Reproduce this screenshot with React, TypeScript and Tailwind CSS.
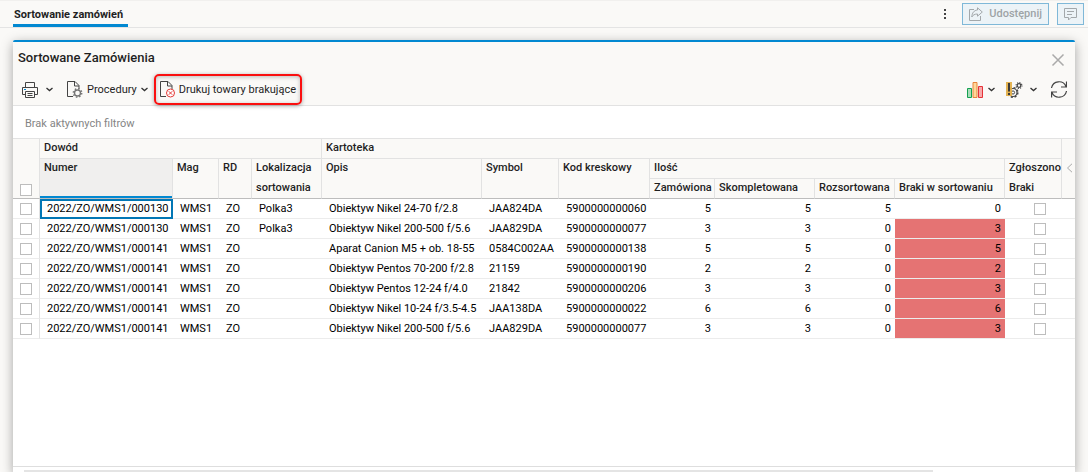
import { useState } from 'react';

type Row = {
  number: string;
  location: string;
  description: string;
  symbol: string;
  barcode: string;
  ordered: number;
  completed: number;
  sorted: number;
  missing: number;
};

const ROWS: Row[] = [
  { number: '2022/ZO/WMS1/000130', location: 'Polka3', description: 'Obiektyw Nikel 24-70 f/2.8', symbol: 'JAA824DA', barcode: '5900000000060', ordered: 5, completed: 5, sorted: 5, missing: 0 },
  { number: '2022/ZO/WMS1/000130', location: 'Polka3', description: 'Obiektyw Nikel 200-500 f/5.6', symbol: 'JAA829DA', barcode: '5900000000077', ordered: 3, completed: 3, sorted: 0, missing: 3 },
  { number: '2022/ZO/WMS1/000141', location: '', description: 'Aparat Canion M5 + ob. 18-55', symbol: '0584C002AA', barcode: '5900000000138', ordered: 5, completed: 5, sorted: 0, missing: 5 },
  { number: '2022/ZO/WMS1/000141', location: '', description: 'Obiektyw Pentos 70-200 f/2.8', symbol: '21159', barcode: '5900000000190', ordered: 2, completed: 2, sorted: 0, missing: 2 },
  { number: '2022/ZO/WMS1/000141', location: '', description: 'Obiektyw Pentos 12-24 f/4.0', symbol: '21842', barcode: '5900000000206', ordered: 3, completed: 3, sorted: 0, missing: 3 },
  { number: '2022/ZO/WMS1/000141', location: '', description: 'Obiektyw Nikel 10-24 f/3.5-4.5', symbol: 'JAA138DA', barcode: '5900000000022', ordered: 6, completed: 6, sorted: 0, missing: 6 },
  { number: '2022/ZO/WMS1/000141', location: '', description: 'Obiektyw Nikel 200-500 f/5.6', symbol: 'JAA829DA', barcode: '5900000000077', ordered: 3, completed: 3, sorted: 0, missing: 3 },
];

const CHECKBOX =
  'block size-3 appearance-none border border-[#bdbdbd] bg-white checked:bg-[#0288d1]';
const HEAD = 'border-r border-b border-[#e2e2e2] px-1 text-left align-top font-medium';
const CELL = 'border-b border-[#ececec] pt-px';

const Chevron = () => (
  <svg width="7" height="5" viewBox="0 0 7 5" fill="none" stroke="#333" strokeWidth="1.3">
    <path d="M.5 1l3 2.6 3-2.6" />
  </svg>
);

const PrinterIcon = () => (
  <svg width="16" height="16" viewBox="0 0 16 16" fill="none" stroke="#444">
    <path d="M3.5 5.500V.5h9v5M3.500 12.500h-3v-7h15v7h-3M3.500 9.500h9v6h-9zM5.500 11.500h5M5.500 13.500h5" />
    <path d="M2 7.500h2" stroke="#0288d1" />
  </svg>
);

const PAGE_PATH = 'M6 15.500H.5V.5h7.500l4 4V8M7.500.5v4.500H12';

const ProcedureIcon = () => (
  <svg width="16" height="17" viewBox="0 0 16 17" fill="none" stroke="#444">
    <path d={PAGE_PATH} />
    <g stroke="#777">
      <circle cx="10.500" cy="12" r="3" strokeWidth="1.400" />
      <circle cx="10.500" cy="12" r="4.200" strokeWidth="1.500" strokeDasharray="1.500 1.800" />
    </g>
  </svg>
);

const MissingIcon = () => (
  <svg width="16" height="17" viewBox="0 0 16 17" fill="none" stroke="#444">
    <path d={PAGE_PATH} />
    <g stroke="#e53935">
      <circle cx="10.500" cy="12" r="4" fill="#fff" />
      <path d="M8.800 10.300l3.400 3.400M12.200 10.300l-3.400 3.400" />
    </g>
  </svg>
);

const ChartIcon = () => (
  <svg width="16" height="16" viewBox="0 0 16 16">
    <path d="M.5 6.500h4v9h-4z" fill="#a9dcb9" stroke="#12a150" />
    <path d="M11.500 4.500h4v11h-4z" fill="#f7a9ab" stroke="#e53238" />
    <path d="M6 .5h4v15H6z" fill="#ffd79a" stroke="#e8833a" />
  </svg>
);

const SettingsIcon = () => (
  <svg width="17" height="16" viewBox="0 0 17 16" fill="none" stroke="#444">
    <circle cx="13" cy="3.500" r="1.800" strokeWidth="1.200" />
    <circle cx="13" cy="3.500" r="2.900" strokeWidth="1.200" strokeDasharray="1.100 1.180" />
    <circle cx="7" cy="10.500" r="1.600" />
    <circle cx="7" cy="10.500" r="4" strokeWidth="1.200" />
    <circle cx="7" cy="10.500" r="4.900" strokeWidth="1.400" strokeDasharray="2 1.850" />
    <path d="M0 0h6v14H0z" fill="#e3b04b" stroke="none" opacity=".95" />
    <path d="M3 1v8.500M3 11v2" strokeWidth="2" stroke="#3a3a3a" />
  </svg>
);

const RefreshIcon = () => (
  <svg width="16" height="17" viewBox="0 0 16 17" fill="none" stroke="#444" strokeWidth="1.200">
    <path d="M.5 7A7.600 7.600 0 0 1 15 5.500M15.500.5v5.500H10M15.500 10A7.600 7.600 0 0 1 1 11.500M.6 16.500V11H6" />
  </svg>
);

const ShareIcon = () => (
  <svg width="14" height="14" viewBox="0 0 14 14" fill="none" stroke="#a3a8ab">
    <path d="M5 2.500H.5v11h11V9" />
    <path d="M8.500 3V.8L13.300 5 8.500 9.200V7C5.500 7 4 8 2.800 10 3 6 5 3.300 8.500 3z" />
  </svg>
);

const CommentIcon = () => (
  <svg width="13" height="13" viewBox="0 0 13 13" fill="none" stroke="#a3a8ab">
    <path d="M.5.5h12v9H7L4.500 12V9.500h-4zM3 3.500h7M3 6.500h5" />
  </svg>
);

export default function App() {
  const [selected, setSelected] = useState<number[]>([]);

  const toggle = (index: number) =>
    setSelected((prev) =>
      prev.includes(index) ? prev.filter((i) => i !== index) : [...prev, index]
    );

  const toggleAll = () =>
    setSelected(selected.length === ROWS.length ? [] : ROWS.map((_, i) => i));

  return (
    <div className="flex h-screen flex-col overflow-hidden bg-[#faf9f7] font-['Roboto','Liberation_Sans',sans-serif] text-[11px] leading-5 text-[#1f1f1f]">
      <header className="flex h-7 shrink-0 items-stretch border-y border-t-[#f1f0ee] border-b-[#e4e4e4] pr-1 pl-[13px]">
        <a href="#sortowanie" className="border-b-3 border-[#0288d1] pt-1 pr-[5px] pl-px font-bold">
          Sortowanie zamówień
        </a>
        <div className="ml-auto flex items-center">
          <button type="button" aria-label="Więcej" className="mr-4 flex flex-col gap-0.5">
            <span className="size-0.5 bg-[#444]" />
            <span className="size-0.5 bg-[#444]" />
            <span className="size-0.5 bg-[#444]" />
          </button>
          <button
            type="button"
            className="mr-2 flex h-[22px] items-center gap-1.5 border border-[#7fb8d8] bg-[#ecf3f7] px-1.5 font-medium text-[#9ea3a6]"
          >
            <ShareIcon />
            Udostępnij
          </button>
          <button
            type="button"
            aria-label="Komentarze"
            className="flex h-[22px] items-center border border-[#7fb8d8] bg-[#ecf3f7] px-1.5"
          >
            <CommentIcon />
          </button>
        </div>
      </header>

      <main className="mx-[13px] mt-3 flex min-h-0 flex-1 flex-col rounded-t-xs border-t-2 border-[#0288d1] bg-white shadow-[0_3px_12px_rgba(0,0,0,0.35)]">
        <div className="flex h-8 shrink-0 items-center justify-between bg-[#faf9f7] pr-2.5 pl-[5px]">
          <h1 className="text-[13px] font-medium">Sortowane Zamówienia</h1>
          <button type="button" aria-label="Zamknij" className="pt-1">
            <svg width="14" height="14" viewBox="0 0 14 14" stroke="#aaa" strokeWidth="1.500">
              <path d="M1.500 1.500l11 11M12.500 1.500l-11 11" />
            </svg>
          </button>
        </div>

        <div className="flex h-8 shrink-0 items-center border-b border-[#e2e2e2] bg-[#faf9f7] pr-2 pl-[9px]">
          <button type="button" aria-label="Drukuj" className="mr-3.5 flex items-center gap-2">
            <PrinterIcon />
            <Chevron />
          </button>
          <button type="button" className="mr-1.5 flex items-center gap-1">
            <ProcedureIcon />
            Procedury
            <Chevron />
          </button>
          <button
            type="button"
            className="flex h-[31px] items-center gap-[3px] rounded-[5px] border-2 border-[#fa0f0f] px-1 shadow-[0_1px_4px_rgba(0,0,0,0.35),inset_0_1px_4px_rgba(0,0,0,0.25)]"
          >
            <MissingIcon />
            Drukuj towary brakujące
          </button>
          <div className="ml-auto flex items-center">
            <button type="button" aria-label="Wykresy" className="mr-[11px] flex items-center gap-[5px]">
              <ChartIcon />
              <Chevron />
            </button>
            <button type="button" aria-label="Ustawienia" className="mr-3.5 flex items-center gap-[7px]">
              <SettingsIcon />
              <Chevron />
            </button>
            <button type="button" aria-label="Odśwież">
              <RefreshIcon />
            </button>
          </div>
        </div>

        <p className="h-8 shrink-0 px-3 py-2 text-[#858585]">Brak aktywnych filtrów</p>

        <div className="min-h-0 flex-1 overflow-hidden border-t border-[#e2e2e2]">
          <table className="w-full table-fixed border-separate border-spacing-0 whitespace-nowrap">
            <colgroup>
              <col className="w-[27px]" />
              <col className="w-[133px]" />
              <col className="w-[46px]" />
              <col className="w-[33px]" />
              <col className="w-[70px]" />
              <col className="w-[160px]" />
              <col className="w-[77px]" />
              <col className="w-[91px]" />
              <col className="w-[65px]" />
              <col className="w-[100px]" />
              <col className="w-[80px]" />
              <col className="w-[110px]" />
              <col className="w-[57px]" />
              <col />
            </colgroup>
            <thead className="bg-[#faf9f7] leading-[18px]">
              <tr className="h-5">
                <th rowSpan={3} className="border-r border-b border-r-[#e2e2e2] border-b-[#bdbdbd] pb-0.5 pl-[7px] align-bottom">
                  <input
                    type="checkbox"
                    aria-label="Zaznacz wszystkie"
                    className={CHECKBOX}
                    checked={selected.length === ROWS.length}
                    onChange={toggleAll}
                  />
                </th>
                <th colSpan={4} className={HEAD}>Dowód</th>
                <th colSpan={8} className={HEAD}>Kartoteka</th>
                <th rowSpan={3} className="border-b border-[#bdbdbd] pl-0.5 align-top">
                  <button type="button" aria-label="Pokaż kolumny" className="mt-6">
                    <svg width="7" height="10" viewBox="0 0 7 10" fill="none" stroke="#aaa">
                      <path d="M6 .8L1.500 5 6 9.200" />
                    </svg>
                  </button>
                </th>
              </tr>
              <tr className="h-5">
                <th rowSpan={2} className={`${HEAD} border-b-[#bdbdbd] bg-[#f0efee] font-bold shadow-[inset_0_-2px_0_#0288d1]`}>Numer</th>
                <th rowSpan={2} className={`${HEAD} border-b-[#bdbdbd]`}>Mag</th>
                <th rowSpan={2} className={`${HEAD} border-b-[#bdbdbd]`}>RD</th>
                <th rowSpan={2} className={`${HEAD} border-b-[#bdbdbd]`}>
                  <span className="block h-5">Lokalizacja</span>
                  <span className="block">sortowania</span>
                </th>
                <th rowSpan={2} className={`${HEAD} border-b-[#bdbdbd]`}>Opis</th>
                <th rowSpan={2} className={`${HEAD} border-b-[#bdbdbd]`}>Symbol</th>
                <th rowSpan={2} className={`${HEAD} border-b-[#bdbdbd]`}>Kod kreskowy</th>
                <th colSpan={4} className={HEAD}>Ilość</th>
                <th rowSpan={2} className={`${HEAD} border-b-[#bdbdbd]`}>
                  <span className="block h-5">Zgłoszono</span>
                  <span className="block">Braki</span>
                </th>
              </tr>
              <tr className="h-5">
                <th className={`${HEAD} border-b-[#bdbdbd]`}>Zamówiona</th>
                <th className={`${HEAD} border-b-[#bdbdbd]`}>Skompletowana</th>
                <th className={`${HEAD} border-b-[#bdbdbd]`}>Rozsortowana</th>
                <th className={`${HEAD} border-b-[#bdbdbd]`}>Braki w sortowaniu</th>
              </tr>
            </thead>
            <tbody className="leading-[18px] text-black">
              {ROWS.map((row, index) => (
                <tr key={index} className="h-5">
                  <td className={`${CELL} border-r border-r-[#e2e2e2] pl-[7px]`}>
                    <input
                      type="checkbox"
                      aria-label={`Zaznacz wiersz ${index + 1}`}
                      className={CHECKBOX}
                      checked={selected.includes(index)}
                      onChange={() => toggle(index)}
                    />
                  </td>
                  <td className={`${CELL} pl-[7px] ${index === 0 ? 'outline-2 -outline-offset-2 outline-[#0277b5]' : ''}`}>
                    {row.number}
                  </td>
                  <td className={`${CELL} pl-[7px]`}>WMS1</td>
                  <td className={`${CELL} pl-[7px]`}>ZO</td>
                  <td className={`${CELL} pl-[7px]`}>{row.location}</td>
                  <td className={`${CELL} pl-[7px]`}>{row.description}</td>
                  <td className={`${CELL} pl-[7px]`}>{row.symbol}</td>
                  <td className={`${CELL} pl-[7px]`}>{row.barcode}</td>
                  <td className={`${CELL} pr-1 text-right`}>{row.ordered}</td>
                  <td className={`${CELL} pr-1 text-right`}>{row.completed}</td>
                  <td className={`${CELL} pr-1 text-right`}>{row.sorted}</td>
                  <td className={`${CELL} pr-1 text-right ${row.missing > 0 ? 'bg-[#e57373] bg-clip-padding' : ''}`}>{row.missing}</td>
                  <td colSpan={2} className={CELL}>
                    <input
                      type="checkbox"
                      aria-label={`Zgłoszono braki ${index + 1}`}
                      className={`${CHECKBOX} mx-auto`}
                    />
                  </td>
                </tr>
              ))}
            </tbody>
          </table>
        </div>

        {/* horizontal scroll bar */}
        <div className="shrink-0 border-t border-[#dedede] pt-[3px] pr-[142px] pl-[11px]">
          <div className="h-0.5 bg-[#e4e4e4]" />
        </div>
      </main>
    </div>
  );
}
